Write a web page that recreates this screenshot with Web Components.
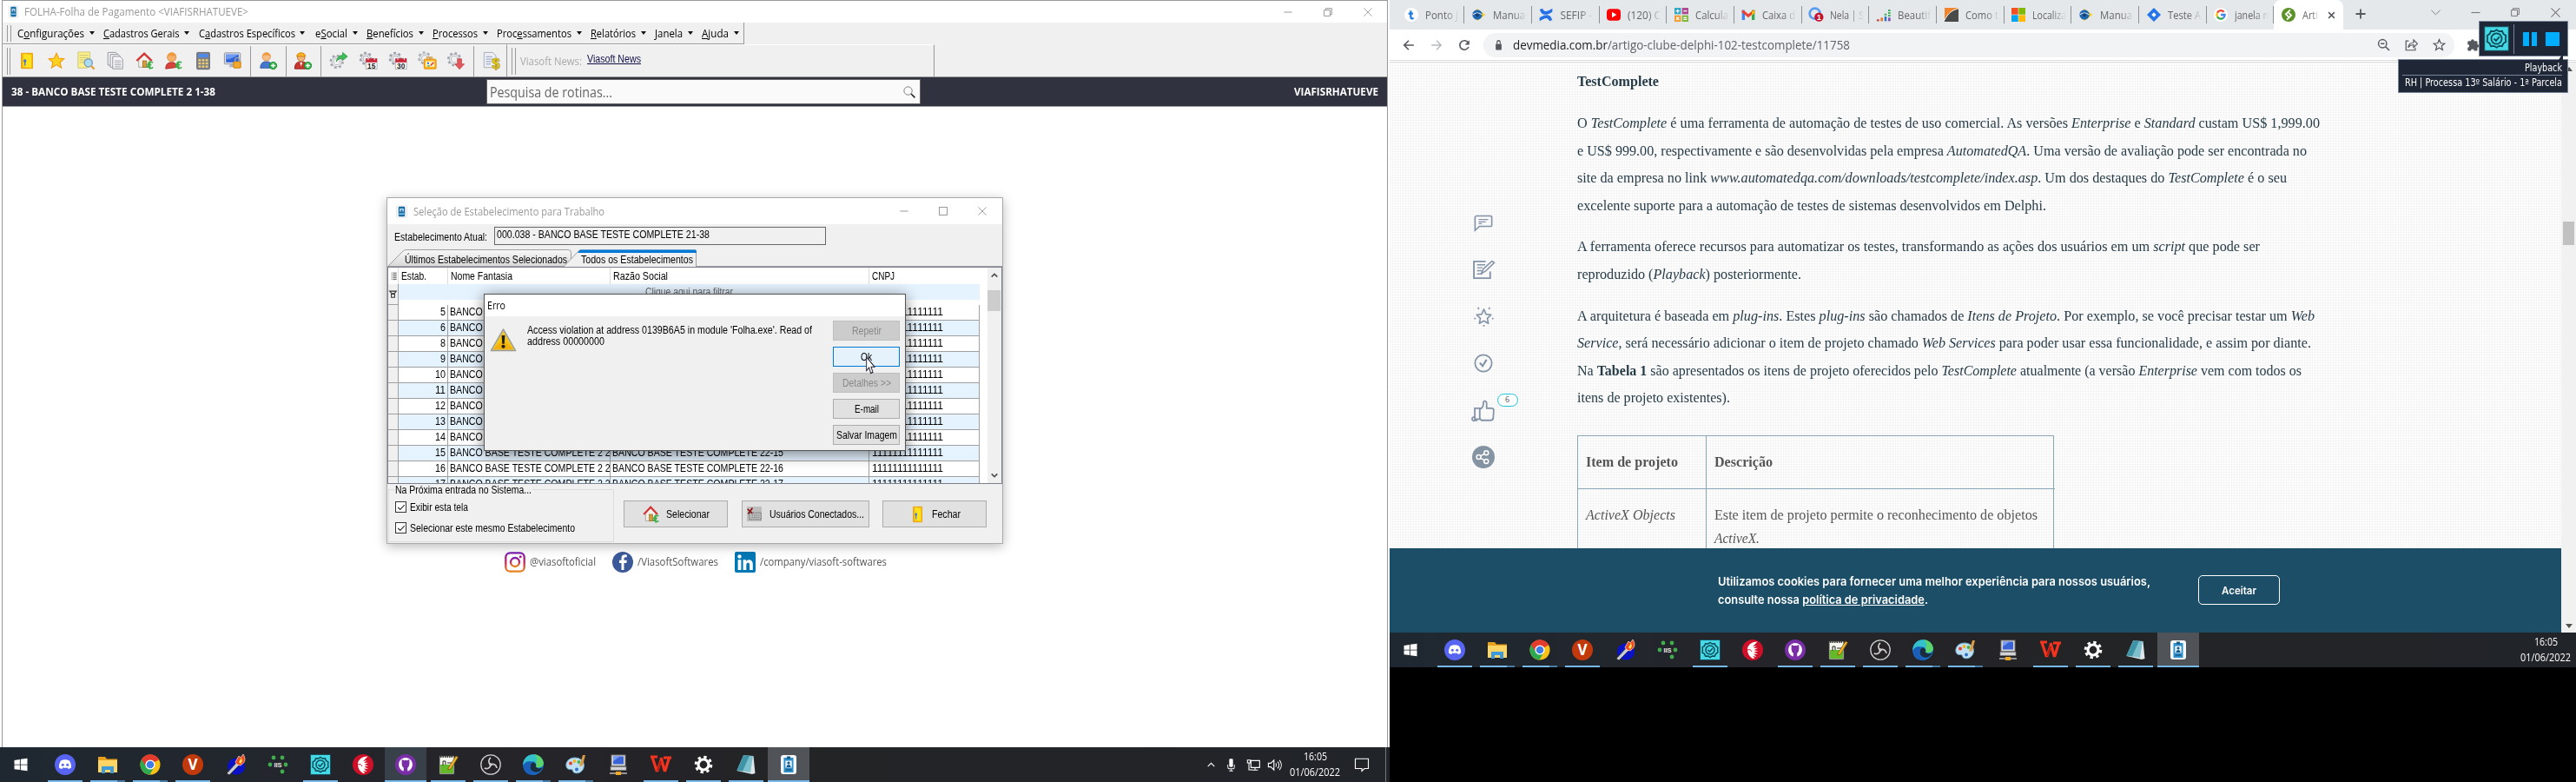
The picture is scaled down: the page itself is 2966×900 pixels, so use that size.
<!DOCTYPE html>
<html lang="pt-BR">
<head>
<meta charset="utf-8">
<title>FOLHA-Folha de Pagamento</title>
<style>
html,body{margin:0;padding:0;background:#000}
body{width:2966px;height:900px;overflow:hidden;font-family:"Open Sans","Noto Sans",sans-serif;font-size:12px;color:#000}
</style>
</head>
<body>
<desk-screens></desk-screens>
<script>
const make=(name,css,html)=>customElements.define(name,class extends HTMLElement{
  connectedCallback(){
    if(this.shadowRoot)return;
    const r=this.attachShadow({mode:'open'});
    r.innerHTML='<style>*{box-sizing:border-box}:host{display:block;box-sizing:border-box}'+css+'</style>'+(typeof html==='function'?html(this):html);
  }
});
const T=(w,t,s='')=>`<fit-text w="${w}" style="${s}">${t}</fit-text>`;
const I=(n,s=24,h=s)=>`<app-icon name="${n}" w="${s}" h="${h}"></app-icon>`;

/* ---------- icon set, drawn on a 24 x 24 box ---------- */
const gear=(c,r=6.2,cx=10,cy=10)=>`<g fill="none" stroke="${c}"><circle cx="${cx}" cy="${cy}" r="${r+1.4}" stroke-width="2.6" stroke-dasharray="3 2.97"/><circle cx="${cx}" cy="${cy}" r="${r-1}" stroke-width="3"/><circle cx="${cx}" cy="${cy}" r="${r-1}" stroke="#f4f4f6" stroke-width="1.4"/></g>`;
const cal=n=>gear('#9a9fa8',5.6,9,9)+`<rect x="9" y="9.500" width="14" height="13" fill="#fff" stroke="#999" stroke-width=".8"/><rect x="9" y="9" width="14" height="5" fill="#c8283a"/><path d="M12 8v3M20 8v3" stroke="#eee"/><text x="16" y="21.800" font-family="Liberation Sans" font-weight="700" font-size="9" text-anchor="middle" fill="#222">${n}</text>`;
const euro='<path d="M22 14.500c-2-2-6-1.500-6 2v1.500c0 3.500 4 4 6 2M14 17h6M14 19.500h5M18 12.500v10" fill="none" stroke="#3fae49" stroke-width="1.700"/>';
const plus='<circle cx="18" cy="18" r="4.500" fill="#35b44a" stroke="#168a2c"/><path d="M18 15.300v5.400M15.300 18h5.400" stroke="#fff" stroke-width="1.600"/>';
const house='<path d="M4 11v9h14v-9l-7-7z" fill="#f3f1ea" stroke="#a9a59a"/><path d="M1.500 12L11 3l9.500 9" fill="none" stroke="#d63535" stroke-width="2.600"/><rect x="9" y="12" width="5" height="8" fill="#d99a3e" stroke="#8d5e18" stroke-width=".7"/>';
const jig='<g fill="none" stroke="#0d4a58" stroke-width="1.500"><path d="M12 3.500l2.400 1.600 2.900-.3 1.200 2.600 2.400 1.600-.3 3 .3 3-2.400 1.600-1.200 2.600-2.900-.3L12 20.500l-2.400-1.600-2.900.3-1.200-2.600-2.400-1.600.3-3-.3-3 2.400-1.600 1.200-2.600 2.900.3z"/><circle cx="12" cy="12" r="5"/><path d="M9.500 12l2 2 3.300-3.800"/></g>';
const ICONS={
app:'<rect x="1" y="0" width="22" height="24" rx="2" fill="#fff" stroke="#ccc"/><rect x="5" y="1.500" width="14" height="21" rx="2" fill="#1b6fa8"/><path d="M9 12V7h6v5" fill="none" stroke="#fff" stroke-width="2"/><path d="M6 17h12" stroke="#7fc1e4" stroke-width="3"/>',
door:'<path d="M5 2.500h14v19H5z" fill="#f5b51b" stroke="#e89a0c"/><path d="M7 3l11 1v17L7 20z" fill="#ffe21c" stroke="#f0b400" stroke-width=".7"/><circle cx="9.500" cy="12" r="1.800" fill="#3c74d6"/><path d="M9.500 13v5" stroke="#3c74d6" stroke-width="1.500"/>',
star:'<path d="M12 2.500l2.800 6.300 6.800.6-5.200 4.500 1.700 6.800L12 17l-6.100 3.700 1.700-6.800-5.200-4.500 6.800-.6z" fill="#ffd21f" stroke="#f09a14" stroke-width="1.200"/>',
docsearch:'<path d="M2 1h15v18l-4 2H2z" fill="#fbf08a" stroke="#c9c27a"/><path d="M4 5h11M4 8h11M4 11h8M4 14h6" stroke="#c3c27c"/><circle cx="15" cy="14.500" r="5" fill="#a9dcf2" stroke="#7d9cb8" stroke-width="1.500"/><path d="M18.500 18.500l4 4" stroke="#e6a43a" stroke-width="2.600"/>',
copies:'<g fill="#f7f7f9" stroke="#8b8e96"><path d="M2.500 1.500h10l2 2v14h-12z"/><path d="M5.500 4h10l2 2v14h-12z"/><path d="M8.500 6.500h9l3.500 3.500v12H8.500z"/></g><path d="M11 12h8M11 14.500h8M11 17h8M11 19.500h8" stroke="#9a9da5"/>',
house:house+euro,
user:'<path d="M2 22c0-7 4-8 7.500-8s6.500 2 7 6z" fill="#d8433a" stroke="#a82a24"/><circle cx="9.500" cy="7.500" r="5.500" fill="#f6b06a" stroke="#d98a3e"/><path d="M4 6c1-5 9-6 11-1-3 2-7 1-8 0-1 1-2 2-3 1z" fill="#ef9a3c"/>'+euro,
calc:'<rect x="4" y="1.500" width="16" height="21" rx="1" fill="#7d828c" stroke="#5c616b"/><rect x="6" y="3.500" width="12" height="4" fill="#4c8bf0"/><g fill="#f5cf6a"><rect x="6" y="10" width="3" height="2.500"/><rect x="10.500" y="10" width="3" height="2.500"/><rect x="15" y="10" width="3" height="2.500"/><rect x="6" y="14" width="3" height="2.500"/><rect x="10.500" y="14" width="3" height="2.500"/><rect x="15" y="14" width="3" height="2.500"/><rect x="6" y="18" width="3" height="2.500"/><rect x="10.500" y="18" width="3" height="2.500"/><rect x="15" y="18" width="3" height="2.500"/></g>',
monitor:'<rect x="1.500" y="2" width="20" height="14" rx="1" fill="#dfe3ea" stroke="#848a96"/><rect x="3.500" y="4" width="16" height="10" fill="#2f62d8"/><path d="M3.500 10c5 0 9-2 16-6H3.500z" fill="#6f9bf2"/><path d="M9 16h5l1 4H7z" fill="#aeb4bf"/><rect x="13" y="13" width="9" height="8" rx="1" fill="#f3a92b" stroke="#c77d10"/><path d="M15 13v-2.500a2.500 2.500 0 015 0V13" fill="none" stroke="#9aa0aa" stroke-width="1.500"/>',
useradd:'<path d="M2 21c0-6 3-8 7.500-8s7.500 2 7.500 8z" fill="#4577cc" stroke="#2f569c"/><circle cx="9.500" cy="7" r="5" fill="#f6bd86" stroke="#d9904a"/><path d="M4.500 6c0-6 10-6 10.500 0-3-1-7-2-10.500 0z" fill="#ee9a3d"/>'+plus,
worker:'<path d="M1.500 22c0-7 3-9 8-9s8 2 8 9z" fill="#c8372f" stroke="#8f211c"/><path d="M8 14l1.500 5L11 14z" fill="#fff"/><circle cx="9.500" cy="8" r="4.600" fill="#f2b377" stroke="#b5712c"/><path d="M4 6.500C4 .5 15 .5 15 6.500z" fill="#ffb41f" stroke="#c77d10"/>'+plus,
gearok:gear('#a3a7af',6.200,9.500,13)+'<path d="M9 13c1-5 4-8 8-8V1.500l6 5-6 5V9c-4 0-6 1-8 4z" fill="#3fc15a" stroke="#1f8f39" stroke-width=".8"/>',
cal15:cal(15),cal30:cal(30),
gearpic:gear('#a9adb5',5.600,8.500,8.500)+'<rect x="8" y="10" width="15" height="12" rx="1" fill="#ffb31a" stroke="#e08a00"/><rect x="10" y="12.500" width="11" height="7" fill="#fff3c4"/><path d="M12 10V7.500h6V10" fill="none" stroke="#e0a040" stroke-width="1.500"/><circle cx="13" cy="15" r="1.300" fill="#3b78e0"/><path d="M16 18l4-4" stroke="#e23b3b" stroke-width="1.700"/><path d="M12 18.500h3" stroke="#3aa655" stroke-width="1.500"/>',
geardown:gear('#a3a7af',6.200,10,10)+'<path d="M14 9.500h5v6.500h3.500L16.500 22.500 10.500 16H14z" fill="#e2595b" stroke="#c0393c" stroke-width=".8"/>',
docmoney:'<path d="M2.500 1.500h11l4 4v15h-15z" fill="#eceef3" stroke="#a5aab5"/><path d="M5 7h8M5 10h9M5 13h7M5 16h6" stroke="#a5b1cf" stroke-width="1.200"/><text x="17.500" y="21.500" text-anchor="middle" font-family="Liberation Sans" font-weight="700" font-size="18" fill="#f7dc1a" stroke="#ab9214" stroke-width=".8">$</text>',
conn:'<rect width="24" height="24" fill="#bdbdbd"/><path d="M1 4l8 7M9 2L2 12" stroke="#8f1111" stroke-width="2.400"/><rect x="4" y="10" width="19" height="11" fill="none" stroke="#444" stroke-width="1.300" stroke-dasharray="1.500 1.500"/><path d="M8 14h12M8 17.500h12" stroke="#555" stroke-dasharray="2 1.500"/>',
search:'<circle cx="9.500" cy="9.500" r="8" fill="none" stroke="#666" stroke-width="1.400"/><path d="M15.500 15.500l7.500 7.500" stroke="#222" stroke-width="2.800"/>',
warn:'<path d="M12 1.500L23 22H1z" fill="#b9b9b2" stroke="#9b9b94" stroke-width="1" stroke-linejoin="round"/><path d="M12 3.500L21.500 20.800h-19z" fill="#f6c514"/><path d="M12 12L21.500 20.800h-19z" fill="#f2b00c"/><path d="M10.500 7.500h3l-.6 8h-1.800z" fill="#1d1d1d"/><circle cx="12" cy="18" r="1.600" fill="#1d1d1d"/>',
insta:'<defs><linearGradient id="g" x1="0" y1="0" x2="0" y2="1"><stop offset="0" stop-color="#7a1fb5"/><stop offset=".5" stop-color="#d0215c"/><stop offset="1" stop-color="#e8851c"/></linearGradient></defs><g fill="none" stroke="url(#g)" stroke-width="2.300"><rect x="1.300" y="1.300" width="21.400" height="21.400" rx="5"/><circle cx="12" cy="12" r="5"/></g><circle cx="18.200" cy="5.800" r="1.500" fill="#a2218a"/>',
fb:'<circle cx="12" cy="12" r="12" fill="#3b5998"/><path d="M13.500 21v-8h2.800l.5-3.200h-3.300V8c0-1 .5-1.700 1.800-1.700h1.500V3.500c-4-.7-6.300.6-6.300 4v2.300H8V13h2.500v8z" fill="#fff"/>',
linked:'<rect width="24" height="24" rx="2" fill="#0077b5"/><circle cx="5.500" cy="5.500" r="2.200" fill="#fff"/><path d="M3.600 9.300h3.800V21H3.600zM9.600 9.300h3.600V11c2-3 7.600-2.500 7.600 3v7H17v-6c0-3.500-3.700-3.200-3.700 0v6H9.600z" fill="#fff"/>',
win:'<path d="M2 5.200l8.500-1.200v7.500H2zM11.700 3.800L22 2.400v9.100H11.700zM2 12.700h8.500v7.400L2 18.900zM11.700 12.700H22v9l-10.300-1.400z" fill="#fff"/>',
discord:'<circle cx="12" cy="12" r="12" fill="#5865f2"/><path d="M7 7.500c3-1.600 7-1.600 10 0 1.500 2.500 2.300 5 2 8-1 .9-2 1.300-3.300 1.500l-1-1.600c-1.700.4-3.700.4-5.400 0l-1 1.600c-1.300-.2-2.300-.6-3.300-1.500-.3-3 .5-5.500 2-8z" fill="#fff"/><circle cx="9.300" cy="12.300" r="1.500" fill="#5865f2"/><circle cx="14.700" cy="12.300" r="1.500" fill="#5865f2"/>',
folder:'<path d="M1 3h8l2 2.500h12V21H1z" fill="#e8a11c"/><path d="M1 7h22v14H1z" fill="#ffd566"/><path d="M5 22v-8h14v8h-4v-4H9v4z" fill="#3b9bdc"/>',
chrome:'<circle cx="12" cy="12" r="11.500" fill="#fbc116"/><path d="M12 12L2 6.300A11.500 11.500 0 0122 6.300z" fill="#e33b2e"/><path d="M12 12L2 6.300A11.500 11.500 0 0011.500 23.500l4-7z" fill="#2da94f"/><path d="M12 6.500h10A11.500 11.500 0 002 6.300l4.500 7z" fill="#e33b2e"/><circle cx="12" cy="12" r="5.600" fill="#fff"/><circle cx="12" cy="12" r="4.300" fill="#3f7de8"/>',
vee:'<circle cx="12" cy="12" r="12" fill="#c2390c"/><text x="12" y="18" text-anchor="middle" font-family="Open Sans" font-weight="700" font-size="17" fill="#fff">V</text>',
torch:'<ellipse cx="13" cy="14" rx="10" ry="9.500" fill="#0a12c8"/><path d="M2 22L14 9l3 3L5 24z" fill="#c9cbd2" stroke="#333" stroke-width=".8"/><path d="M12 9l4-7 2 2 3-4c3 5 3 9-3 13l-4-1z" fill="#f04a1a" stroke="#fff" stroke-width=".6"/><path d="M16 9l3-5 1 4-2 3z" fill="#ffe25a"/>',
iis:'<g fill="#3fae4c"><circle cx="7" cy="4" r="2.400"/><circle cx="17" cy="4" r="2.400"/><circle cx="3" cy="12" r="2.400"/><circle cx="21" cy="12" r="2.400"/><circle cx="17" cy="20" r="2.400"/></g><text x="12" y="14.700" text-anchor="middle" font-family="Liberation Sans" font-weight="700" font-size="7.500" fill="#e8e8e8">IIS</text>',
jig:'<rect width="24" height="24" fill="#16505e"/><rect x="1" y="1" width="22" height="22" fill="#45d9e5"/>'+jig,
bird:'<circle cx="12" cy="12" r="12" fill="#cf1028"/><path d="M17.500 2.500C10 2.500 5.500 7 6 12.500c.2 3.500 2 7 6 9.500l2.500-.5-2.500-2.500 4.500 1-3.500-3.500 5 .5-4.500-2.700 5-1-5-1 4.500-2.500-5 .3 3.500-3-4.500 1.200z" fill="#fff"/><path d="M6 12c3-1 4 0 5 2" stroke="#cf1028" fill="none"/>',
github:'<circle cx="12" cy="12" r="12" fill="#7a2fa8"/><path d="M12 4a8 8 0 00-3 15.400c.6.100.8-.2.800-.6v-3c-.8-.6-1.300-1.200-1.600-2C7 10.500 8 8 7.600 6.200c1 0 2 .5 2.700 1 1-.3 2.400-.3 3.400 0 .7-.5 1.700-1 2.700-1-.4 1.800.6 4.300-.6 7.600-.3.800-.8 1.400-1.600 2v3c0 .4.200.7.800.6A8 8 0 0012 4z" fill="#fff"/>',
npp:'<path d="M2 2h17v21H2z" fill="#f4f6ee" stroke="#3a3a3a"/><path d="M3 12h15v10H3z" fill="#63b928"/><path d="M3 3h15" stroke="#444" stroke-width="2" stroke-dasharray="1.500 1"/><path d="M6 13V8h3v4M11 10h3M14 10h4" stroke="#222" fill="none"/><path d="M12 16L21 2l2.500 1.500L15 17l-3 1z" fill="#f0b52a" stroke="#6b4a08" stroke-width=".7"/>',
obs:'<circle cx="12" cy="12" r="11.200" fill="#262426" stroke="#cfcfcf" stroke-width="1.300"/><g fill="none" stroke="#cfcfcf" stroke-width="1.700"><path d="M12 12c-3-2-3-6 0-8"/><path d="M12 12c3.300-1.600 6.500.5 7 4"/><path d="M12 12c-.3 3.600-4 5.500-7.200 4"/></g><circle cx="12" cy="12" r="1.800" fill="#cfcfcf"/>',
edge:'<circle cx="12" cy="12" r="11.800" fill="#1777cf"/><path d="M.3 11C1 4 7 0 12 .2 19 .3 24 5.500 23.800 11c-.3 4-6 5.200-9 3.500 1.500-2 .5-6-3.300-6.300C6 7.800 1.500 9 .3 13z" fill="#35c1c9"/><path d="M13 .2C19 .5 24 5.500 23.800 11c-.3 4-6 5.200-9 3.500 1.500-2 1-4 0-5C17 8 17 3 13 .2z" fill="#5bd56a"/><path d="M14.800 14.500c3 3 6.500 1.500 8 .8-3 7.500-12 7-14 1.500-1-3 .5-7 3-7.500 3 1 4.200 3.500 3 5.200z" fill="#1b2c3e"/><path d="M8.500 14c-.5 6 4 9 9 8.500-8 4-17 0-17-9 2-5 6-6 9-4.500z" fill="#1b5fb8"/>',
paint:'<path d="M11 4C4 4 0 9 1 14c1 4 4 3.500 6 3.500s1 3 3.500 4c5 1.500 11-2 11-9C21 7 16 4 11 4z" fill="#bfe0f2" stroke="#6aa7cc"/><circle cx="6" cy="10.500" r="2" fill="#e6402f"/><circle cx="10.500" cy="8" r="1.900" fill="#f2b61d"/><circle cx="15.500" cy="9" r="1.900" fill="#48b04b"/><circle cx="13" cy="17.500" r="2" fill="#316fc9"/><path d="M16 14l4-13h3l-3 12z" fill="#d99a48"/>',
pc:'<rect x="4" y="1" width="16" height="12.500" fill="#d9d9dc" stroke="#777"/><rect x="6" y="2.500" width="12" height="9" fill="#3a63d8"/><path d="M6 8l8-5.500H6z" fill="#7a9cf0"/><rect x="3" y="14.500" width="18" height="4" fill="#d2d3d6" stroke="#777" stroke-width=".7"/><path d="M2 22h20" stroke="#b9bbc1" stroke-width="1.500"/><rect x="9" y="20" width="6" height="4" fill="#f2a91e"/>',
wps:'<path d="M0 3h8M2 3.500L7.500 20M7.500 20L13 4.500M12 4L16.500 20M16.500 20L21.500 4M15 4h9" stroke="#f5341f" stroke-width="3.200" fill="none"/><path d="M8 19L12 8" stroke="#b3170f" stroke-width="2"/>',
gear:'<g fill="none" stroke="#fff"><circle cx="12" cy="12" r="6" stroke-width="3.200"/><circle cx="12" cy="12" r="8.800" stroke-width="3" stroke-dasharray="3.400 3.510"/></g>',
note:'<path d="M9 1.500L20.500 2l2 20L19 23 1.500 19z" fill="#dfe6ea"/><path d="M9 1.500l11 .5-3 19L1.500 18.500z" fill="#7fc0cd"/><path d="M9 1.500l7 .3L8 19.500l-6.500-1z" fill="#3e93a6"/>',
badge:'<rect x="3" y="1" width="18" height="22" rx="3" fill="#f5f8fa"/><path d="M6.500 4h11v17h-11z" fill="#2e8fca"/><rect x="10" y="2.500" width="4" height="3" fill="#195a86"/><rect x="8.300" y="7.500" width="7.400" height="8" fill="#e9f4fb"/><circle cx="12" cy="10" r="1.600" fill="#195a86"/><path d="M9.500 15c0-4 5-4 5 0z" fill="#195a86"/><path d="M8.500 18h7" stroke="#195a86" stroke-width="1.500"/>',
caret:'<path d="M5 15l7-7 7 7" fill="none" stroke="#fff" stroke-width="2"/>',
mic:'<rect x="8" y="2" width="8" height="14" rx="2" fill="#fff"/><path d="M5 12v4a3 3 0 003 3h8a3 3 0 003-3v-4M12 19v4M8 23h8" fill="none" stroke="#fff" stroke-width="1.600"/>',
net:'<path d="M8 5h15v12H8z" fill="none" stroke="#fff" stroke-width="1.700"/><path d="M15 17v4M10 21.500h10M2 4h5v5H2zM4.500 9v12h6" fill="none" stroke="#fff" stroke-width="1.600"/>',
vol:'<path d="M2 9h4l5-5v16l-5-5H2z" fill="none" stroke="#fff" stroke-width="1.600"/><path d="M14 9c1.500 2 1.500 4 0 6M17 6.500c3 3.500 3 7.500 0 11M20 4c4 5 4 11 0 16" fill="none" stroke="#fff" stroke-width="1.500"/>',
action:'<path d="M2 3h20v15h-6l-4 4v-4H2z" fill="none" stroke="#fff" stroke-width="1.500"/>',
ponto:'<circle cx="12" cy="12" r="12" fill="#fff"/><path d="M11 5v11c0 2 2 3 5 2M7 10h8" stroke="#1e7be8" stroke-width="3.400" fill="none"/>',
manual:'<path d="M8 1l15 11L8 23z" fill="#f8cf1c"/><circle cx="9" cy="12" r="8.500" fill="#1f66b0"/><path d="M1 12c5-4 11-4 16 0" stroke="#fff" stroke-width="1.500" fill="none"/><circle cx="9" cy="12.500" r="3" fill="#17406f"/>',
conf:'<path d="M1 3l5-2c4 7 6 6 17 0v6c-10 6-14 6-19 2zM23 21l-5 2c-4-7-6-6-17 0v-6c10-6 14-6 19-2z" fill="#2671e8"/>',
yt:'<rect y="2" width="24" height="20" rx="6" fill="#f00"/><path d="M9 7l8 5-8 5z" fill="#fff"/>',
calcu:'<rect width="11" height="11" fill="#35a7c6"/><rect x="13" width="11" height="11" fill="#b04a92"/><rect y="13" width="11" height="11" fill="#f29a2e"/><rect x="13" y="13" width="11" height="11" fill="#7fb83a"/><path d="M2.500 5.500h6M5.500 2.500v6M15.500 5.500h6M3 16l5 5M8 16l-5 5M15.500 17h6M15.500 20h6" stroke="#fff" stroke-width="1.800"/>',
gmail:'<path d="M1 4h5v17H1z" fill="#4285f4"/><path d="M18 4h5v17h-5z" fill="#34a853"/><path d="M1 4h3l8 7 8-7h3v4L12 17 1 8z" fill="#ea4335"/><path d="M18 6l5-2v5l-5 4z" fill="#fbbc04"/>',
nela:'<circle cx="10" cy="10" r="9" fill="none" stroke="#5a9cf0" stroke-width="4"/><circle cx="17" cy="16" r="7.800" fill="#c4122f"/><text x="17" y="21" text-anchor="middle" font-family="Liberation Sans" font-weight="700" font-size="13" fill="#fff">1</text>',
bars:'<path d="M2 23v-3" stroke="#c33" stroke-width="4"/><path d="M8.500 23v-6" stroke="#e87b2a" stroke-width="4"/><path d="M15 23v-8" stroke="#3674c9" stroke-width="4"/><path d="M21.500 23v-6" stroke="#7b4fb5" stroke-width="4"/><path d="M15 13V9M21.500 15V3" stroke="#3cae5c" stroke-width="4" stroke-dasharray="3 1.500"/>',
como:'<rect width="24" height="24" fill="#4a4a4a"/><path d="M0 0h24v2C12 4 6 10 0 21z" fill="#f2852b"/><path d="M24 1C12 4 6 10 0 21" stroke="#fff" stroke-width="1.500" fill="none"/>',
ms:'<rect width="11.500" height="11.500" fill="#f25022"/><rect x="12.500" width="11.500" height="11.500" fill="#7fba00"/><rect y="12.500" width="11.500" height="11.500" fill="#00a4ef"/><rect x="12.500" y="12.500" width="11.500" height="11.500" fill="#ffb900"/>',
jira:'<path d="M12 0l12 12-12 12L0 12z" fill="#2574ea"/><path d="M12 8l4 4-4 4-4-4z" fill="#fff"/>',
google:'<circle cx="12" cy="12" r="12" fill="#fff"/><g fill="none" stroke-width="3.400"><path d="M17.500 7.300A7 7 0 006 8.500" stroke="#ea4335"/><path d="M6 8.500a7 7 0 000 7" stroke="#fbbc05"/><path d="M6 15.500A7 7 0 0016.500 17.300" stroke="#34a853"/><path d="M16.500 17.300A7 7 0 0019 12h-7" stroke="#4285f4"/></g>',
dev:'<circle cx="12" cy="12" r="12" fill="#5b9227"/><path d="M14 2.500L5.500 11l5.500 5.500 1.800-1.800L9.300 11l6.500-6.500zM10 21.500l8.500-8.500L13 7.500l-1.800 1.800 3.500 3.700-6.500 6.500z" fill="#fff"/>',
back:'<path d="M22 12H4M12 3l-9 9 9 9" fill="none" stroke="#55585c" stroke-width="2.800"/>',
fwd:'<path d="M2 12h18M12 3l9 9-9 9" fill="none" stroke="#b5b8bb" stroke-width="2.400"/>',
reload:'<path d="M20.500 15.500A9 9 0 1120 7.500" fill="none" stroke="#55585c" stroke-width="2.800"/><path d="M22 2v9h-9z" fill="#55585c"/>',
lock:'<rect x="3" y="9" width="18" height="14" rx="2" fill="#55585c"/><path d="M7 9V6.500a5 5 0 0110 0V9" fill="none" stroke="#55585c" stroke-width="2.800"/>',
zoomout:'<circle cx="10" cy="10" r="7.500" fill="none" stroke="#55585c" stroke-width="2.300"/><path d="M6.500 10h7M15.500 15.500l7 7" stroke="#55585c" stroke-width="2.500"/>',
share:'<path d="M7 5H2v17h17v-5M6 17c1-6 5-9 10-9V3l7 7-7 7v-5c-4 0-7 1-10 5z" fill="none" stroke="#55585c" stroke-width="1.900"/>',
starline:'<path d="M12 2.500l2.800 6.700 7.200.6-5.500 4.700 1.700 7L12 17.700l-6.200 3.800 1.700-7L2 9.800l7.200-.6z" fill="none" stroke="#55585c" stroke-width="2"/>',
puzzle:'<path d="M20 11V7a2 2 0 00-2-2h-4a3 3 0 10-6 0H4a2 2 0 00-2 2v4a3 3 0 110 6v4a2 2 0 002 2h4a3 3 0 116 0h4a2 2 0 002-2v-4a3 3 0 100-6z" fill="#55585c"/>',
comment:'<path d="M1.500 23V4a2 2 0 012-2h17a2 2 0 012 2v11a2 2 0 01-2 2H7z" fill="none" stroke="#8494a8" stroke-width="1.800"/><path d="M6 7h12M6 10.500h9M6 13h4" stroke="#8494a8" stroke-width="1.500"/>',
edit:'<path d="M19 14v8H1V2h13" fill="none" stroke="#8494a8" stroke-width="1.800"/><path d="M4.500 6h9M4.500 9.500h6M4.500 13h5M4.500 17h6" stroke="#8494a8" stroke-width="1.400"/><path d="M9.500 16l2-5L21 1.500l2.500 2L13.500 14z" fill="#fafafa" stroke="#8494a8" stroke-width="1.600"/>',
rate:'<path d="M12 3l2.600 6 6 .7-4.400 4.200 1.200 6.100-5.400-3-5.400 3 1.200-6.100L3.400 9.700l6-.7z" fill="none" stroke="#8494a8" stroke-width="1.700" stroke-linejoin="round"/><path d="M12 22v1.800M.5 14.500l1.600-.5M23.500 14.500l-1.600-.5M5 1l1 1.800M19 1l-1 1.800" stroke="#8494a8" stroke-width="2"/>',
check:'<circle cx="12" cy="12" r="10.500" fill="none" stroke="#8494a8" stroke-width="1.900"/><path d="M7.500 11.500l3.500 4 5-8" fill="none" stroke="#8494a8" stroke-width="2.400"/>',
thumb:'<path d="M7.500 10.500c3-1 4-4 4-7 0-3 3.600-2.500 3.600.7V9.500h5.400c2 0 2.500 1 2.400 2.500l-.5 8c-.2 2-1 2.800-3 2.800H9.500L7.500 21zM2 9.500h5.500v12H2zM2 19.500a2 2 0 100 3.500h3" fill="none" stroke="#8494a8" stroke-width="1.700"/>',
sharec:'<circle cx="12" cy="12" r="12" fill="#8494a3"/><g fill="none" stroke="#fff" stroke-width="1.400"><circle cx="7" cy="12" r="2.300"/><circle cx="15" cy="7.500" r="2.300"/><circle cx="15" cy="16.500" r="2.300"/><path d="M9 11l4-2.500M9 13l4 2.500"/></g>',
cursor:'<path d="M1 1v18l4.500-4 3 7.500 3.500-1.500-3-7H15z" fill="#fff" stroke="#223" stroke-width="1.400"/>',
min:'<path d="M1 12h22" stroke="currentColor" stroke-width="2.400"/>',
max:'<rect x="1.200" y="1.200" width="21.600" height="21.600" fill="none" stroke="currentColor" stroke-width="2.400"/>',
rest:'<path d="M6 6V1.500h16.500V18H18M1.500 6H18v16.500H1.500z" fill="none" stroke="currentColor" stroke-width="2.400"/>',
x:'<path d="M1 1l22 22M23 1L1 23" stroke="currentColor" stroke-width="2.200"/>',
xb:'<path d="M3 3l18 18M21 3L3 21" stroke="#55585c" stroke-width="4"/>',
plus:'<path d="M12 1v22M1 12h22" stroke="#55585c" stroke-width="3.600"/>',
chev:'<path d="M1 6l11 11L23 6" fill="none" stroke="#777" stroke-width="2"/>',
up:'<path d="M2 17l10-10 10 10" fill="none" stroke="#505050" stroke-width="5"/>',
down:'<path d="M2 7l10 10L22 7" fill="none" stroke="#505050" stroke-width="5"/>',
filter:'<path d="M2 3h20l-6 7H8zM7 12h10v10H7z" fill="none" stroke="#333" stroke-width="3"/>',
list:'<path d="M8 3h15M8 8h15M8 13h15M8 18h15M8 23h15" stroke="#333" stroke-width="2.300"/><path d="M2 3h3M2 8h3M2 13h3M2 18h3M2 23h3" stroke="#333" stroke-width="2.300"/>',
tick:'<path d="M3 12l6 6L21 5" fill="none" stroke="#333" stroke-width="2.800"/>'
};
make('app-icon',':host{display:inline-flex;flex:none}svg{display:block;overflow:visible}',e=>{
  const w=e.getAttribute('w'),h=e.getAttribute('h');
  return `<svg width="${w}" height="${h}" viewBox="0 0 24 24" preserveAspectRatio="none">${ICONS[e.getAttribute('name')]}</svg>`});

/* ---------- payroll application window ---------- */
make('menu-entry',':host{display:flex;align-items:center;height:24px;gap:5.500px}i{border:3px solid transparent;border-top:4px solid #111;border-bottom:0}','<slot></slot><i></i>');
make('tool-grip',':host{width:5px;border-left:1px solid #999;border-right:1px solid #999;margin:3px 0 2px}','');
const menus=[[20,77,'C<u>o</u>nfigurações'],[119,87.500,'<u>C</u>adastros Gerais'],[228.500,111,'C<u>a</u>dastros Específicos'],[363,37,'e<u>S</u>ocial'],[422,54,'<u>B</u>enefícios'],[498,52,'<u>P</u>rocessos'],[572,86,'Proc<u>e</u>ssamentos'],[680,52,'<u>R</u>elatórios'],[754,32,'<u>J</u>anela'],[808,31,'<u>A</u>juda']];
make('app-menu',':host{display:flex;width:854px;height:25px;border-right:1px solid #999;border-bottom:1px solid #999;background:#f0f0f0;padding-left:5px;color:#000}tool-grip{margin-right:7px}',()=>{
  let h='<tool-grip></tool-grip>',x=20;
  menus.forEach(m=>{h+=`<menu-entry style="margin-left:${m[0]-x}px">${T(m[1],m[2])}</menu-entry>`;x=m[0]+m[1]+11.500});
  return h});
make('tool-bars',`:host{display:flex;height:38px;border-bottom:1px solid #999}
.a,.b{display:flex;border-top:1px solid #fff;border-right:1px solid #999}.a{width:581px;padding-left:5px}.b{width:491px;margin-left:1px;padding-left:4px;align-items:stretch}
.cells{display:flex;align-items:center;padding-left:3px}.cells app-icon{margin:0 5.900px}.cells i{width:1px;height:35px;background:#999;margin:0 3px}
.n{color:#aaa;display:flex;align-items:center;margin-left:5px}.l{color:#101048;margin:9px 0 0 6px;font-family:"Liberation Sans",sans-serif;line-height:15px}`,
`<div class="a"><tool-grip></tool-grip><div class="cells">${['door','star','docsearch','copies','house','user','calc','monitor'].map(n=>I(n,22)).join('')}<i></i>${I('useradd',22)}<i></i>${I('worker',22)}<i></i>${['gearok','cal15','cal30','gearpic','geardown'].map(n=>I(n,22)).join('')}<i></i>${I('docmoney',22)}</div></div>
<div class="b"><tool-grip></tool-grip><div class="n">${T(71,'Viasoft News:')}</div><div class="l">${T(62,'<u>Viasoft News</u>')}</div></div>`);
make('routine-bar',`:host{display:flex;align-items:center;height:34px;background:#303240;border-bottom:1px solid #999;color:#fff;font-weight:700}
.s{width:500px;height:29px;margin-left:312px;border:1px solid #666;background:#fafafa;color:#666;font-weight:400;font-size:16px;display:flex;align-items:center;justify-content:space-between;padding:0 5px 0 3px}fit-text{flex:none}`,
`<span style="width:10px"></span>${T(235,'38 - BANCO BASE TESTE COMPLETE 2 1-38')}<div class="s">${T(141,'Pesquisa de rotinas...')}${I('search',14)}</div><span style="width:430px"></span>${T(97,'VIAFISRHATUEVE')}`);
make('social-links',':host{display:flex;justify-content:center;align-items:center;color:#555;padding:512px 0 0 2px;line-height:24px}fit-text{margin-left:5px}app-icon+fit-text{margin-right:19px}.z{margin-right:0!important}',
`${I('insta')}${T(76,'@viasoftoficial')}${I('fb')}${T(93,'/ViasoftSoftwares')}${I('linked')}<fit-text class="z" w="146">/company/viasoft-softwares</fit-text>`);
make('payroll-window',`:host{width:1596px;height:860px;margin-left:2px;background:#fff;border:1px solid #999;border-bottom:0}
header{display:flex;align-items:center;height:25px;padding-left:7px;color:#999}header fit-text{margin-left:7px}.w{margin-left:auto;display:flex;gap:36px;padding-right:17px;align-items:center}
section{background:#f0f0f0;height:63px}`,
`<header>${I('app',11,13)}${T(258,'FOLHA-Folha de Pagamento &lt;VIAFISRHATUEVE&gt;')}<div class="w">${I('min',10)}${I('rest',10)}${I('x',10)}</div></header>
<section><app-menu></app-menu><tool-bars></tool-bars></section><routine-bar></routine-bar><social-links></social-links>`);

/* ---------- establishment dialog ---------- */
make('push-button',`:host{display:flex;align-items:center;justify-content:center;border:1px solid #adadad;background:#e1e1e1}:host([off]){background:#ccc;border-color:#bfbfbf;color:#888}:host([hot]){background:#e5f1fb;border-color:#0078d7}`,'<slot></slot>');
make('tab-strip',`:host{display:flex;position:relative;height:20px;line-height:16px;padding:4px 0 0 20px;gap:16px;z-index:0}svg{position:absolute;left:0;top:0;z-index:-1}`,
`<svg width="708" height="20"><defs><linearGradient id="t" x1="0" y1="0" x2="0" y2="1"><stop offset="0" stop-color="#f8f8f8"/><stop offset="1" stop-color="#d9d9d9"/></linearGradient></defs><path d="M0 19.500H708" stroke="#a0a0a0"/><path d="M1 19L17 3Q19 .5 22 .5H208Q211.500 .5 211.500 4V19" fill="url(#t)" stroke="#a0a0a0"/><path d="M203 20L221 1H355.500V20" fill="#f0f0f0" stroke="#a0a0a0"/><path d="M219 4L222 .5H354Q356 .5 356 4z" fill="#0078d7"/></svg>${T(187,'Últimos Estabelecimentos Selecionados')}${T(129,'Todos os Estabelecimentos')}`);
const ids=[5,6,8,9,10,11,12,13,14,15,16,17];
make('grid-row',`:host{display:grid;grid-template-columns:12px 57px 187px 298px 127px;height:18px;border-bottom:1px solid #a0a0a0;line-height:17px;background:#fff}:host([alt]){background:#e5f3ff}
div{border-right:1px solid #a0a0a0;overflow:hidden;white-space:nowrap;padding-left:2px}.i{background:#f0f0f0}.n{text-align:right;padding-right:2px}div:last-child{padding-left:3px}`,
e=>{const n=e.getAttribute('n'),s='2-'+(''+n).padStart(2,'0');return `<div class="i"></div><div class="n">${T(n>9?12:6,n)}</div><div>${T(200,'BANCO BASE TESTE COMPLETE 2 '+s)}</div><div>${T(197,'BANCO BASE TESTE COMPLETE 2'+s)}</div><div>${T(82,'11111111111111')}</div>`});
make('data-grid',`:host{display:flex;height:250px;border:1px solid #7c7f8c;background:#fff;overflow:hidden}
main{width:681px;overflow:hidden;height:248px}.h,.f{display:grid;grid-template-columns:12px 57px 187px 298px 127px}.h{height:19px;line-height:20px}.h div{border-right:1px solid #dcdcdc;padding-left:3px}.h div:last-child{border:0}
.f{height:24px;grid-template-columns:12px 1fr}.f>div:first-child{background:#f0f0f0;border:solid #a0a0a0;border-width:0 1px 1px 0;display:flex;align-items:center;justify-content:center}.f p{margin:0;background:#e5f3ff;height:18px;line-height:19px;color:#666;padding-left:284px}
aside{width:16px;margin-left:auto;background:#f0f0f0;display:flex;flex-direction:column;align-items:center;padding:5px 1px 5px 0}aside i{width:15px;height:24px;background:#cdcdcd;margin-top:13px}aside app-icon:last-child{margin-top:auto}`,
`<main><div class="h"><div style="padding:5px 0 0 3px;line-height:0">${I('list',7,9)}</div><div>${T(29,'Estab.')}</div><div>${T(71,'Nome Fantasia')}</div><div>${T(63,'Razão Social')}</div><div>${T(26,'CNPJ')}</div></div>
<div class="f"><div>${I('filter',9)}</div><p>${T(101,'Clique aqui para filtrar')}</p></div>${ids.map((n,i)=>`<grid-row n="${n}" ${i%2?'alt':''}></grid-row>`).join('')}</main><aside>${I('up',8)}<i></i>${I('down',8)}</aside>`);
make('check-line',`:host{display:flex;align-items:center;height:13px;gap:4px}b{width:13px;height:13px;border:1px solid #333;background:#fff;display:flex;align-items:center;justify-content:center}`,`<b>${I('tick',10)}</b><slot></slot>`);
make('select-dialog',`:host{width:710px;height:399px;border:1px solid #aaa;background:#f0f0f0;box-shadow:0 3px 12px rgba(0,0,0,.28);font-family:"Liberation Sans",sans-serif}
header{display:flex;align-items:center;height:30px;background:#fff;color:#999;padding-left:10px;font-family:"Open Sans",sans-serif}header fit-text{margin-left:7px}.w{margin-left:auto;display:flex;gap:35px;padding-right:18px}
.r{display:flex;height:29px;padding-left:8px;align-items:flex-start}.r>fit-text{margin-top:8px;line-height:15px}.in{width:382px;height:21px;margin:3px 0 0 8px;border:1px solid #666;padding-left:2px;line-height:17px}
footer{display:flex;height:68px}fieldset{position:relative;margin:6px 0 0 1px;padding:13px 0 0 7px;border:1px solid #dcdcdc;width:260px;height:61px;display:flex;flex-direction:column;gap:11px}
legend{position:absolute;top:-7px;left:6px;padding:0 1px;background:#f0f0f0;line-height:15px}
push-button{height:31px;margin-top:19px;gap:7px}`,
`<header>${I('app',13,13)}${T(220,'Seleção de Estabelecimento para Trabalho')}<div class="w">${I('min',10)}${I('max',10)}${I('x',10)}</div></header>
<div class="r">${T(107,'Estabelecimento Atual:')}<div class="in">${T(245,'000.038 - BANCO BASE TESTE COMPLETE 21-38')}</div></div>
<tab-strip></tab-strip><data-grid></data-grid>
<footer><fieldset><legend>${T(157,'Na Próxima entrada no Sistema...')}</legend><check-line>${T(67,'Exibir esta tela')}</check-line><check-line>${T(190,'Selecionar este mesmo Estabelecimento')}</check-line></fieldset>
<push-button style="width:120px;margin-left:11px">${I('house',20,22)}${T(50,'Selecionar')}</push-button><push-button style="width:147px;margin-left:16px;gap:9px">${I('conn',17)}${T(109,'Usuários Conectados...')}</push-button><push-button style="width:120px;margin-left:15px;gap:8px;padding-left:2px">${I('door',17,22)}${T(33,'Fechar')}</push-button></footer>`);
make('error-dialog',`:host{width:486px;height:181px;border:1px solid #555;background:#f0f0f0;box-shadow:0 3px 16px rgba(0,0,0,.5);font-family:"Liberation Sans",sans-serif}
header{height:25px;background:#fff;font-family:"Open Sans",sans-serif;padding:0 0 1px 3px;display:flex;align-items:center}
main{display:flex}p{margin:10px 0 0 12px;line-height:13px;flex:1}p fit-text{display:block}.k{display:flex;flex-direction:column;gap:7px;padding:5px 6px 0 0}.k push-button{width:77px;height:23px}`,
`<header>${T(21,'Erro')}</header><main><div style="padding:13px 0 0 6px">${I('warn',31,29)}</div><p>${T(328,'Access violation at address 0139B6A5 in module \'Folha.exe\'. Read of')}${T(89,'address 00000000')}</p>
<div class="k"><push-button off>${T(34,'Repetir')}</push-button><push-button hot>${T(13,'Ok')}</push-button><push-button off>${T(56,'Detalhes &gt;&gt;')}</push-button><push-button>${T(28,'E-mail')}</push-button><push-button>${T(70,'Salvar Imagem')}</push-button></div></main>`);

/* ---------- taskbar ---------- */
make('task-cell',`:host{position:relative;width:48px;height:40px;margin-right:1px;display:flex;align-items:center;justify-content:center;flex:none}:host([start]){margin-right:3px}
:host([run])::after{content:"";position:absolute;left:4px;right:4px;bottom:0;height:2px;background:#76b9ed}:host([multi])::after{background:linear-gradient(90deg,#76b9ed 31px,#4a7ca3 31px)}
:host([full])::after{left:0;right:0}:host([dim]){background:#384049}:host([active]){background:#505459}`,e=>I(e.getAttribute('name'),e.hasAttribute('start')?18:24));
const apps=[['win','start'],['discord','run'],['folder','run multi'],['chrome','run multi'],['vee','run'],['torch',''],['iis',''],['jig','run'],['bird',''],['github','run'],['npp','run'],['obs','run'],['edge','run multi'],['paint','run multi'],['pc',''],['wps','run'],['gear','run'],['note','run'],['badge','run full active']];
make('task-bar',`:host{display:flex;height:40px;background:linear-gradient(90deg,#1f2831,#252429 35%,#232426 60%,#212429);color:#fff}
.t{margin-left:auto;display:flex;align-items:center}.c{display:flex;flex-direction:column;align-items:center;line-height:18px;height:38px;padding-top:1px}`,
e=>{const p=e.hasAttribute('primary');return apps.map(a=>`<task-cell name="${a[0]}" ${a[1]} ${p&&a[0]==='github'?'full dim':''}></task-cell>`).join('')+
(p?`<div class="t">${I('caret',13)}<span style="width:10px"></span>${I('mic',13,16)}<span style="width:11px"></span>${I('net',16)}<span style="width:8px"></span>${I('vol',17)}<span style="width:9px"></span><div class="c">${T(27,'16:05')}${T(58,'01/06/2022')}</div><span style="width:16px"></span>${I('action',18)}<span style="width:19px;border-right:1px solid #777;height:40px"></span><span style="width:4px"></span></div>`
:`<div class="t"><div class="c" style="margin-right:6px">${T(27,'16:05')}${T(58,'01/06/2022')}</div></div>`)});

/* ---------- browser ---------- */
make('browser-tab',`:host{display:flex;align-items:center;width:77.700px;height:34px;padding-left:8.500px;flex:none;color:#666;position:relative}
div{width:39px;overflow:hidden;margin-left:8px;-webkit-mask-image:linear-gradient(90deg,#000 60%,transparent);mask-image:linear-gradient(90deg,#000 60%,transparent)}
i{width:1px;height:20px;background:#8c9196;margin-left:auto}:host([on]){width:80px;background:#fff;border-radius:8px 8px 0 0}:host([on]) div{width:19px}:host([on]) i{display:none}`,
e=>I(e.getAttribute('icon'),16)+`<div>${T(e.getAttribute('w'),e.getAttribute('t'))}</div>${e.hasAttribute('on')?'<span style="width:10px"></span>'+I('xb',9):''}<i></i>`);
const tabs=[['ponto','Ponto J',38],['manual','Manua',37],['conf','SEFIP -',37],['yt','(120) C',38],['calcu','Calcula',38],['gmail','Caixa d',38],['nela','Nela | S',39],['bars','Beautif',38],['como','Como t',38],['ms','Localiza',39],['manual','Manua',37],['jira','Teste A',38],['google','janela n',39]];
make('tab-row',`:host{display:flex;height:34px;background:#e4e8eb;padding-left:8.500px;color:#777}.w{position:relative;display:flex;align-items:center;height:28px}`,
tabs.map(t=>`<browser-tab icon="${t[0]}" t="${t[1]}" w="${t[2]}"></browser-tab>`).join('')+`<browser-tab on icon="dev" t="Arti" w="18"></browser-tab><div class="w"><span style="width:14px"></span><span style="padding-top:6px">${I('plus',12)}</span><span style="width:75px"></span>${I('chev',11)}<span style="width:35px"></span>${I('min',11)}<span style="width:35px"></span>${I('rest',10)}<span style="width:36px"></span>${I('x',11)}</div>`);
make('address-bar',`:host{display:flex;align-items:center;height:36px;background:#fff;padding-left:15px;border-bottom:1px solid #ddd}
.o{width:1118px;height:28px;border-radius:14px;background:#f1f3f4;display:flex;align-items:center;padding:0 10px 0 13px;color:#5f6368;font-size:14px;margin-left:15px}b{font-weight:400;color:#202124}`,
`${I('back',14)}<span style="width:18px"></span>${I('fwd',14)}<span style="width:18px"></span>${I('reload',14)}<div class="o">${I('lock',9,12)}<span style="width:12px"></span>${T(388,'<b>devmedia.com.br</b>/artigo-clube-delphi-102-testcomplete/11758')}<span style="flex:1"></span>${I('zoomout',15)}<span style="width:17px"></span>${I('share',15)}<span style="width:17px"></span>${I('starline',15)}</div><span style="width:14px"></span>${I('puzzle',15)}`);
make('side-actions',`:host{width:216px;flex:none;display:flex;flex-direction:column;align-items:center;padding-top:171px}
div{height:54px;display:flex;align-items:center;justify-content:center;position:relative}em{position:absolute;left:28px;top:8px;width:24px;height:15px;border:1.500px solid #19c5d4;border-radius:8px;background:#fff;font:9px/12px "Open Sans",sans-serif;text-align:center;color:#555}`,
['comment 22 19','edit 25 23','rate 23 23','check 22 22','thumb 25 25','sharec 26 26'].map((s,i)=>{const a=s.split(' ');return `<div style="margin-top:${i==0?-14:0}px">${I(...a)}${i==4?'<em>6</em>':''}</div>`}).join(''));
const paras=[['',[94,'<b>TestComplete</b>']],['17px',[855,'O <i>TestComplete</i> é uma ferramenta de automação de testes de uso comercial. As versões <i>Enterprise</i> e <i>Standard</i> custam US$ 1,999.00'],[840,'e US$ 999.00, respectivamente e são desenvolvidas pela empresa <i>AutomatedQA</i>. Uma versão de avaliação pode ser encontrada no'],[817,'site da empresa no link <i>www.automatedqa.com/downloads/testcomplete/index.asp</i>. Um dos destaques do <i>TestComplete</i> é o seu'],[540,'excelente suporte para a automação de testes de sistemas desenvolvidos em Delphi.']],
['16px',[786,'A ferramenta oferece recursos para automatizar os testes, transformando as ações dos usuários em um <i>script</i> que pode ser'],[258,'reproduzido (<i>Playback</i>) posteriormente.']],
['16px',[849,'A arquitetura é baseada em <i>plug-ins</i>. Estes <i>plug-ins</i> são chamados de <i>Itens de Projeto</i>. Por exemplo, se você precisar testar um <i>Web</i>'],[845,'<i>Service</i>, será necessário adicionar o item de projeto chamado <i>Web Services</i> para poder usar essa funcionalidade, e assim por diante.'],[834,'Na <b>Tabela 1</b> são apresentados os itens de projeto oferecidos pelo <i>TestComplete</i> atualmente (a versão <i>Enterprise</i> vem com todos os'],[176,'itens de projeto existentes).']]];
make('item-table',`:host{display:grid;grid-template-columns:148px 401px;grid-template-rows:61px 80px;border:1px solid #8aa5b5;width:549px;margin-top:26.500px;color:#555;line-height:27px}
div{padding:16px 9px}div:nth-of-type(odd){border-right:1px solid #8aa5b5}.h{border-bottom:1px solid #8aa5b5;font-weight:700}fit-text{display:block}`,
`<div class="h">${T(106,'Item de projeto')}</div><div class="h">${T(67,'Descrição')}</div><div>${T(103,'<i>ActiveX Objects</i>')}</div><div>${T(372,'Este item de projeto permite o reconhecimento de objetos')}${T(52,'<i>ActiveX.</i>')}</div>`);
make('article-body',`:host{flex:1;font:17px/31.600px "Liberation Serif",serif;color:#263c48;padding-top:5.500px;overflow:hidden}fit-text{display:block}`,
paras.map(p=>`<section style="margin-top:${p[0]||0}">${p.slice(1).map(l=>T(l[0],l[1])).join('')}</section>`).join('')+'<item-table></item-table>');
make('cookie-bar',`:host{display:flex;height:97px;background:#1c4e67;color:#fff;font:600 13.500px/21px Inter,sans-serif;padding-left:378px;align-items:flex-start}
.x{padding-top:28px;width:553px}.x fit-text{display:block}button{width:94px;height:34px;margin:31px 0 0;border:1.500px solid #fff;border-radius:5px;background:none;color:#fff;font:600 12px Inter,sans-serif;padding:0}`,
`<div class="x">${T(498,'Utilizamos cookies para fornecer uma melhor experiência para nossos usuários,')}${T(242,'consulte nossa <u>política de privacidade</u>.')}</div><button>${T(40,'Aceitar')}</button>`);
make('scroll-track',`:host{width:17px;background:#f1f1f1;display:flex;flex-direction:column;align-items:center;padding:5px 0}i{width:13px;height:27px;background:#c1c1c1;margin-top:173px}b{border:4px solid transparent;border-top:0;border-bottom:5px solid #505050}b.d{border-bottom:0;border-top:5px solid #505050;margin-top:auto}`,'<b></b><i></i><b class="d"></b>');
make('web-page',`:host{display:flex;height:657px;margin-top:1px;border-top:1px solid #ddd}.v{width:1349px;display:flex;flex-direction:column}
.c{display:flex;flex:1;overflow:hidden;background:repeating-linear-gradient(0deg,rgba(0,0,0,.022) 0 1px,transparent 1px 3px),repeating-linear-gradient(90deg,rgba(0,0,0,.022) 0 1px,transparent 1px 3px),#fdfdfd}`,
'<div class="v"><div class="c"><side-actions></side-actions><article-body></article-body></div><cookie-bar></cookie-bar></div><scroll-track></scroll-track>');
make('play-panel',`:host{font-family:"DejaVu Sans Condensed","Open Sans",sans-serif;color:#fff;display:flex;flex-direction:column;align-items:flex-end;width:196px}
.p{position:relative;width:103px;height:41px;background:#1f2635;border:1px solid #76859a;display:flex;align-items:center;padding-left:5px}.p::after{content:"";position:absolute;right:5px;bottom:-5px;border:5px solid transparent;border-top:0;border-right:0;border-bottom:8px solid #1f2635}
.s{width:1px;height:34px;background:#76859a;margin:0 10px 0 5px}.z{width:6.500px;height:16px;background:#00adff;margin-right:3px}.q{width:16px;height:16px;background:#00adff;margin-left:7px}
.t{width:196px;height:39px;margin-top:3px;background:#1f2635;border:1px solid #76859a;padding:1px 6px 0 4px;text-align:right;line-height:16px;font-size:11.500px}.t hr{border:0;height:1px;background:#76859a;margin:0}`,
`<div class="p">${I('jig',29)}<div class="s"></div><div class="z"></div><div class="z"></div><div class="q"></div></div><div class="t">${T(43,'Playback')}<hr>${T(181,'RH | Processa 13º Salário - 1ª Parcela')}</div>`);

/* ---------- both monitors ---------- */
make('desk-screens',`:host{display:grid;grid-template-columns:1600px 1366px;height:900px}
.l{position:relative;background:#fff}.r{position:relative;height:768px;background:#fff;overflow:hidden}
select-dialog{position:absolute;left:445px;top:227px}error-dialog{position:absolute;left:557px;top:338px}.cur{position:absolute;left:997px;top:410px}play-panel{position:absolute;left:1161px;top:24px}`,
`<div class="l"><payroll-window></payroll-window><task-bar primary></task-bar><select-dialog></select-dialog><error-dialog></error-dialog><div class="cur">${I('cursor',16,21)}</div></div>
<div class="r"><tab-row></tab-row><address-bar></address-bar><web-page></web-page><task-bar></task-bar><play-panel></play-panel></div>`);

/* Sets a run of text to an exact advance width; defined last so inherited fonts are settled. */
customElements.define('fit-text',class extends HTMLElement{
  connectedCallback(){
    if(this.shadowRoot)return;
    const w=+this.getAttribute('w'),r=this.attachShadow({mode:'open'});
    r.innerHTML=`<style>:host{display:inline-block;flex:none;width:${w}px;white-space:nowrap;text-align:left}span{display:inline-block;transform-origin:0 50%}</style><span><slot></slot></span>`;
    const s=r.querySelector('span'),n=s.getBoundingClientRect().width;
    if(n)s.style.transform=`scaleX(${w/n})`;
  }
});
</script>
</body>
</html>
